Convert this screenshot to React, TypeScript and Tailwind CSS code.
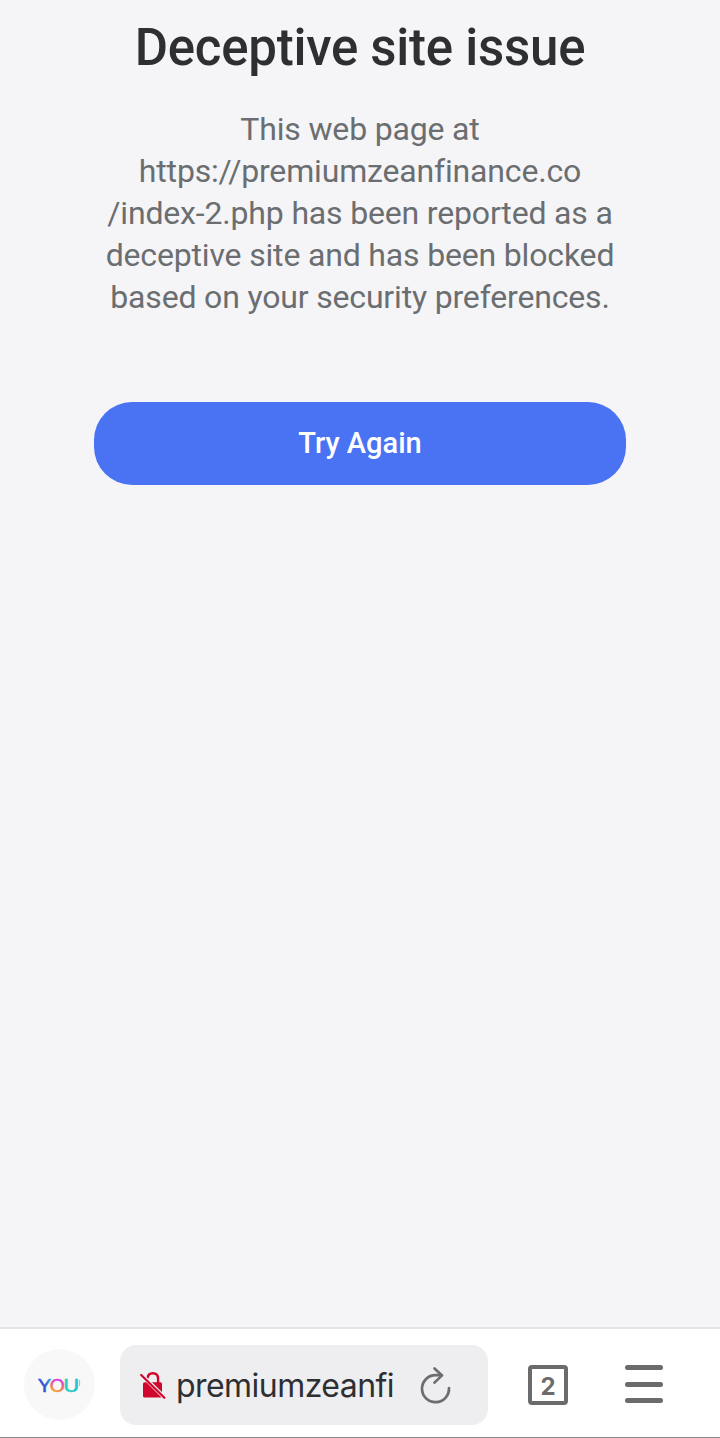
type IconProps = {
    className?: string;
}

function YouLogo() {
    return (
        <div className="mb-px flex h-[71px] w-[71px] items-center justify-center rounded-full bg-[#f8f8f8]">
            <svg width="44" height="20" viewBox="0 0 44 20" fontFamily="Lato, sans-serif" strokeWidth="0.5">
                <defs>
                    <linearGradient id="y" x1="0" y1="0" x2="1" y2="0">
                        <stop offset="0" stopColor="#2459d8" />
                        <stop offset="0.55" stopColor="#3b52cf" />
                        <stop offset="1" stopColor="#28b5dc" />
                    </linearGradient>
                    <linearGradient id="o" x1="0.6" y1="0" x2="0.4" y2="1">
                        <stop offset="0.2" stopColor="#d63be0" />
                        <stop offset="0.55" stopColor="#ef6a78" />
                        <stop offset="0.8" stopColor="#f5a52c" />
                    </linearGradient>
                    <linearGradient id="u" x1="0" y1="0" x2="1" y2="0">
                        <stop offset="0" stopColor="#2bd4ae" />
                        <stop offset="1" stopColor="#25bdda" />
                    </linearGradient>
                </defs>
                <text x="0.3" y="17.2" fontSize="17.5" textLength="12.6" lengthAdjust="spacingAndGlyphs" fill="url(#y)" stroke="url(#y)">Y</text>
                <text x="11.8" y="17.2" fontSize="17.5" textLength="15" lengthAdjust="spacingAndGlyphs" fill="url(#o)" stroke="url(#o)">O</text>
                <text x="25.2" y="17.2" fontSize="17.5" textLength="16" lengthAdjust="spacingAndGlyphs" fill="url(#u)" stroke="url(#u)">U</text>
                <path d="M41.6 5v6" stroke="#b8b8b8" strokeWidth="1" />
            </svg>
        </div>
    );
}

function UnsecureIcon({ className }: IconProps) {
    return (
        <svg className={className} width="28" height="30" viewBox="0 0 28 30" fill="none">
            <path d="M8.4 8.5C8.8 5 10.8 3.2 13.8 3.2c3.4 0 5.3 2.2 5.3 5.5V13" stroke="#d1062c" strokeWidth="2.4" />
            <rect x="4" y="12.3" width="19" height="15.2" rx="1.6" fill="#d1062c" />
            <path d="M2.5 4.6 26 28" stroke="#eeeef0" strokeWidth="4" />
            <path d="M2.2 5 25.4 27.8" stroke="#d1062c" strokeWidth="2.2" strokeLinecap="round" />
        </svg>
    );
}

function ReloadIcon({ className }: IconProps) {
    return (
        <svg className={className} width="32" height="38" viewBox="0 0 32 38" fill="none" stroke="#6c6d6f" strokeWidth="2.7" strokeLinecap="round" strokeLinejoin="round">
            <path d="M29 22A13.5 13.5 0 1 1 15.5 9.2H21.5" />
            <path d="M14.5 2.4 22 9.4 14.5 16.6" />
        </svg>
    );
}

function AddressBar({ host }: { host: string }) {
    return (
        <div className="ml-[25px] flex h-20 w-[368px] items-center rounded-2xl bg-[#eeeef0] pl-[19px]">
            <UnsecureIcon className="shrink-0" />
            <span className="ml-[9px] w-[219px] whitespace-nowrap pt-0.5 font-['Inter',sans-serif] text-[32px] leading-10 tracking-[-0.55px] text-[#2d2f32]">
                {host}
            </span>
            <ReloadIcon className="ml-[25px] shrink-0" />
        </div>
    );
}

function TabCount({ count }: { count: number }) {
    return (
        <button className="ml-10 flex h-10 w-10 items-center justify-center rounded-[4px] border-4 border-[#6a6b6c] pt-[3px] font-['Inter',sans-serif] text-2xl font-bold text-[#6a6b6c]">
            {count}
        </button>
    );
}

function MenuButton() {
    return (
        <button className="mb-[2px] ml-[57px] flex w-[38px] flex-col gap-[11.5px]" aria-label="Menu">
            <span className="h-[5px] rounded-full bg-[#6a6b6c]" />
            <span className="h-[5px] rounded-full bg-[#6a6b6c]" />
            <span className="h-[5px] rounded-full bg-[#6a6b6c]" />
        </button>
    );
}

export default function App() {
    return (
        <div className="flex h-[1438px] w-[720px] flex-col bg-[#f5f5f8] font-['Roboto',sans-serif]">
            <main className="flex flex-1 flex-col items-center pt-4 text-center">
                <h1 className="text-[51px] font-medium leading-[64px] tracking-[-0.25px] text-[#2d2f32]">Deceptive site issue</h1>
                <p className="mt-7 text-[32px] leading-[42px] tracking-[-0.17px] text-[#6b6e70]">
                    This web page at<br />
                    https://premiumzeanfinance.co<br />
                    /index-2.php has been reported as a<br />
                    deceptive site and has been blocked<br />
                    based on your security preferences.
                </p>
                <button className="mt-[84px] h-[83px] w-[532px] rounded-[38px] bg-[#4a73f3] text-[29px] font-medium text-white">
                    Try Again
                </button>
            </main>

            {/* Bottom toolbar */}
            <footer className="flex h-[111px] items-center border-t-2 border-b border-t-[#e4e4e7] border-b-[#87888a] bg-white pl-6 pt-1">
                <YouLogo />
                <AddressBar host="premiumzeanfi" />
                <TabCount count={2} />
                <MenuButton />
            </footer>
        </div>
    );
}
